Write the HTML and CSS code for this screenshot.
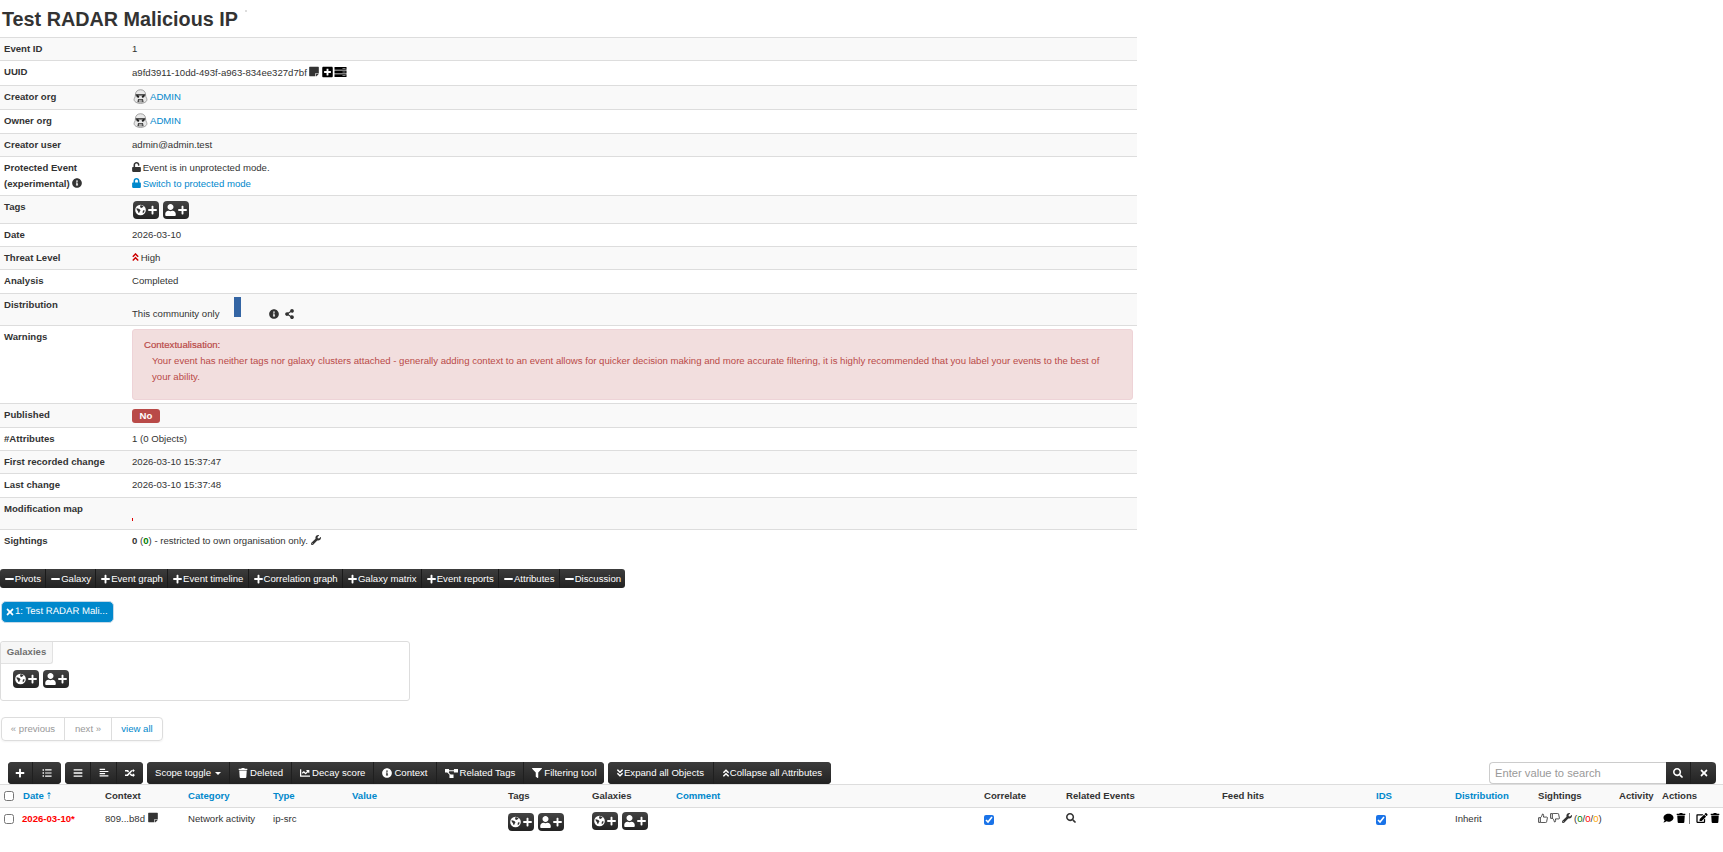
FILE: index.html
```html
<!DOCTYPE html>
<html lang="en">
<head>
<meta charset="utf-8">
<title>Test RADAR Malicious IP</title>
<link rel="stylesheet" href="styles.css">
</head>
<body>
<svg class="sprite" aria-hidden="true">
<symbol id="plus" viewBox="0 0 448 512"><path d="M416 208H272V64c0-17.67-14.33-32-32-32h-32c-17.67 0-32 14.33-32 32v144H32c-17.67 0-32 14.33-32 32v32c0 17.67 14.33 32 32 32h144v144c0 17.67 14.33 32 32 32h32c17.67 0 32-14.33 32-32V304h144c17.67 0 32-14.33 32-32v-32c0-17.67-14.33-32-32-32z"/></symbol>
<symbol id="minus" viewBox="0 0 448 512"><path d="M416 208H32c-17.67 0-32 14.33-32 32v32c0 17.67 14.33 32 32 32h384c17.67 0 32-14.33 32-32v-32c0-17.67-14.33-32-32-32z"/></symbol>
<symbol id="times" viewBox="0 0 352 512"><path d="M242.72 256l100.07-100.07c12.28-12.28 12.28-32.19 0-44.48l-22.24-22.24c-12.28-12.28-32.19-12.28-44.48 0L176 189.28 75.93 89.21c-12.28-12.28-32.19-12.28-44.48 0L9.21 111.45c-12.28 12.28-12.28 32.19 0 44.48L109.28 256 9.21 356.07c-12.28 12.28-12.28 32.19 0 44.48l22.24 22.24c12.28 12.28 32.2 12.28 44.48 0L176 322.72l100.07 100.07c12.28 12.28 32.2 12.28 44.48 0l22.24-22.24c12.28-12.28 12.28-32.19 0-44.48L242.72 256z"/></symbol>
<symbol id="info" viewBox="0 0 512 512"><path d="M256 8C119.043 8 8 119.083 8 256c0 136.997 111.043 248 248 248s248-111.003 248-248C504 119.083 392.957 8 256 8zm0 110c23.196 0 42 18.804 42 42s-18.804 42-42 42-42-18.804-42-42 18.804-42 42-42zm56 254c0 6.627-5.373 12-12 12h-88c-6.627 0-12-5.373-12-12v-24c0-6.627 5.373-12 12-12h12v-64h-12c-6.627 0-12-5.373-12-12v-24c0-6.627 5.373-12 12-12h64c6.627 0 12 5.373 12 12v100h12c6.627 0 12 5.373 12 12v24z"/></symbol>
<symbol id="search" viewBox="0 0 512 512"><path d="M505 442.7L405.3 343c-4.5-4.5-10.6-7-17-7H372c27.6-35.3 44-79.7 44-128C416 93.1 322.9 0 208 0S0 93.1 0 208s93.1 208 208 208c48.3 0 92.7-16.4 128-44v16.3c0 6.4 2.5 12.5 7 17l99.7 99.7c9.4 9.4 24.6 9.4 33.9 0l28.3-28.3c9.4-9.4 9.4-24.6.1-34zM208 336c-70.7 0-128-57.2-128-128 0-70.7 57.2-128 128-128 70.7 0 128 57.2 128 128 0 70.7-57.2 128-128 128z"/></symbol>
<symbol id="trash" viewBox="0 0 448 512"><path d="M432 32H312l-9.4-18.7A24 24 0 0 0 281.1 0H166.8a23.72 23.72 0 0 0-21.4 13.3L136 32H16A16 16 0 0 0 0 48v32a16 16 0 0 0 16 16h416a16 16 0 0 0 16-16V48a16 16 0 0 0-16-16zM53.2 467a48 48 0 0 0 47.9 45h245.8a48 48 0 0 0 47.9-45L416 128H32z"/></symbol>
<symbol id="comment" viewBox="0 0 512 512"><path d="M256 32C114.6 32 0 125.1 0 240c0 49.6 21.4 95 57 130.7C44.5 421.1 2.7 466 2.2 466.5c-2.2 2.3-2.8 5.7-1.5 8.7S4.8 480 8 480c66.3 0 116-31.8 140.6-51.4 32.7 12.3 69 19.4 107.4 19.4 141.4 0 256-93.1 256-208S397.4 32 256 32z"/></symbol>
<symbol id="bars" viewBox="0 0 448 512"><path d="M16 132h416c8.837 0 16-7.163 16-16V76c0-8.837-7.163-16-16-16H16C7.163 60 0 67.163 0 76v40c0 8.837 7.163 16 16 16zm0 160h416c8.837 0 16-7.163 16-16v-40c0-8.837-7.163-16-16-16H16c-8.837 0-16 7.163-16 16v40c0 8.837 7.163 16 16 16zm0 160h416c8.837 0 16-7.163 16-16v-40c0-8.837-7.163-16-16-16H16c-8.837 0-16 7.163-16 16v40c0 8.837 7.163 16 16 16z"/></symbol>
<symbol id="list" viewBox="0 0 512 512"><path d="M30 60h70v80H30zM30 216h70v80H30zM30 372h70v80H30zM160 70h330v60H160zM160 226h330v60H160zM160 382h330v60H160z"/></symbol>
<symbol id="align" viewBox="0 0 448 512"><path d="M0 40h280v60H0zM0 150h448v60H0zM0 260h280v60H0zM0 370h448v60H0z"/></symbol>
<symbol id="random" viewBox="0 0 512 512"><path d="M504 360l-80-80c-10-10-24-3-24 11v37h-50l-52-56-56 62 60 64c5 5 11 8 18 8h80v37c0 14 14 21 24 11l80-80c6-5 6-9 0-14zM10 176h94l52 56 56-62-60-64c-5-5-11-8-18-8H10c-6 0-10 4-10 10v58c0 6 4 10 10 10zm494-30l-80-80c-10-10-24-3-24 11v37h-80c-7 0-13 3-18 8L104 336H10c-6 0-10 4-10 10v58c0 6 4 10 10 10h122c7 0 13-3 18-8l228-248h22v37c0 14 14 21 24 11l80-80c6-5 6-5 0-10z"/></symbol>
<symbol id="filter" viewBox="0 0 512 512"><path d="M487.976 0H24.028C2.71 0-8.047 25.866 7.058 40.971L192 225.941V432c0 7.831 3.821 15.17 10.237 19.662l80 55.98C298.02 518.69 320 507.493 320 487.98V225.941l184.947-184.97C520.021 25.896 509.338 0 487.976 0z"/></symbol>
<symbol id="user" viewBox="0 0 448 512"><path d="M224 256c70.7 0 128-57.3 128-128S294.7 0 224 0 96 57.3 96 128s57.3 128 128 128zm89.6 32h-16.7c-22.2 10.2-46.9 16-72.9 16s-50.6-5.8-72.9-16h-16.7C60.2 288 0 348.2 0 422.4V464c0 26.5 21.5 48 48 48h352c26.5 0 48-21.5 48-48v-41.6c0-74.2-60.2-134.4-134.4-134.4z"/></symbol>
<symbol id="globe" viewBox="0 0 512 512"><circle cx="256" cy="256" r="248" fill="#fff"/><path fill="#333" d="M70 180c40-10 60 10 100 20 30 8 70 30 80 70 6 26-20 40-30 60-12 24-10 60-40 60-30-10-30-60-50-90-20-26-60-50-60-120zM250 40c50 0 110 20 150 60-20 30-50 10-70 40-14 20-40 30-60 10-16-16-40-30-30-60 2-20 2-40 10-50zM380 280c20-10 50-10 70 10-10 50-40 90-80 120-20-20-10-50-10-70 0-24 0-50 20-60z"/></symbol>
<symbol id="note" viewBox="0 0 448 512"><path d="M312 320h136V56c0-13.3-10.7-24-24-24H24C10.7 32 0 42.7 0 56v400c0 13.3 10.7 24 24 24h264V344c0-13.2 10.8-24 24-24zm129 55l-98 98c-4.5 4.5-10.6 7-17 7h-6V352h128v6.1c0 6.3-2.5 12.4-7 16.9z"/></symbol>
<symbol id="lock" viewBox="0 0 448 512"><path d="M400 224h-24v-72C376 68.2 307.8 0 224 0S72 68.2 72 152v72H48c-26.5 0-48 21.5-48 48v192c0 26.5 21.5 48 48 48h352c26.5 0 48-21.5 48-48V272c0-26.5-21.5-48-48-48zm-104 0H152v-72c0-39.7 32.3-72 72-72s72 32.3 72 72v72z"/></symbol>
<symbol id="unlock" viewBox="0 0 448 512"><path d="M400 256H152V152.9c0-39.6 31.7-72.5 71.3-72.9 40-.4 72.7 32.1 72.7 72v16c0 13.3 10.7 24 24 24h32c13.3 0 24-10.7 24-24v-16C376 68 307.5-.3 223.5 0 139.5.3 72 69.5 72 153.5V256H48c-26.5 0-48 21.5-48 48v160c0 26.5 21.5 48 48 48h352c26.5 0 48-21.5 48-48V304c0-26.5-21.5-48-48-48z"/></symbol>
<symbol id="plussq" viewBox="0 0 448 512"><path d="M400 32H48C21.5 32 0 53.5 0 80v352c0 26.5 21.5 48 48 48h352c26.5 0 48-21.5 48-48V80c0-26.5-21.5-48-48-48zm-32 252c0 6.6-5.4 12-12 12h-92v92c0 6.6-5.4 12-12 12h-56c-6.6 0-12-5.4-12-12v-92H92c-6.6 0-12-5.4-12-12v-56c0-6.6 5.4-12 12-12h92v-92c0-6.6 5.4-12 12-12h56c6.6 0 12 5.4 12 12v92h92c6.6 0 12 5.4 12 12v56z"/></symbol>
<symbol id="server" viewBox="0 0 512 512"><path d="M0 40h512v120H0zM0 196h512v120H0zM0 352h512v120H0z"/><path fill="#fff" d="M340 90h130v20H340zM340 246h130v20H340zM340 402h130v20H340z"/></symbol>
<symbol id="share" viewBox="0 0 448 512"><path d="M352 320c-22.608 0-43.387 7.819-59.79 20.895l-102.486-64.054a96.551 96.551 0 0 0 0-41.683l102.486-64.054C308.613 184.181 329.392 192 352 192c53.019 0 96-42.981 96-96S405.019 0 352 0s-96 42.981-96 96c0 7.158.79 14.13 2.276 20.841L155.79 180.895C139.387 167.819 118.608 160 96 160c-53.019 0-96 42.981-96 96s42.981 96 96 96c22.608 0 43.387-7.819 59.79-20.895l102.486 64.054A96.301 96.301 0 0 0 256 416c0 53.019 42.981 96 96 96s96-42.981 96-96-42.981-96-96-96z"/></symbol>
<symbol id="dblup" viewBox="0 0 320 512"><path d="M177 255.7l136 136c9.4 9.4 9.4 24.6 0 33.9l-22.6 22.6c-9.4 9.4-24.6 9.4-33.9 0L160 351.9l-96.4 96.4c-9.4 9.4-24.6 9.4-33.9 0L7 425.7c-9.4-9.4-9.4-24.6 0-33.9l136-136c9.4-9.5 24.6-9.5 34-.1zm-34-192L7 199.7c-9.4 9.4-9.4 24.6 0 33.9l22.6 22.6c9.4 9.4 24.6 9.4 33.9 0l96.4-96.4 96.4 96.4c9.4 9.4 24.6 9.4 33.9 0l22.6-22.6c9.4-9.4 9.4-24.6 0-33.9l-136-136c-9.2-9.4-24.4-9.4-33.8 0z"/></symbol>
<symbol id="dbldown" viewBox="0 0 320 512"><path transform="matrix(1 0 0 -1 0 512)" d="M177 255.7l136 136c9.4 9.4 9.4 24.6 0 33.9l-22.6 22.6c-9.4 9.4-24.6 9.4-33.9 0L160 351.9l-96.4 96.4c-9.4 9.4-24.6 9.4-33.9 0L7 425.7c-9.4-9.4-9.4-24.6 0-33.9l136-136c9.4-9.5 24.6-9.5 34-.1zm-34-192L7 199.7c-9.4 9.4-9.4 24.6 0 33.9l22.6 22.6c9.4 9.4 24.6 9.4 33.9 0l96.4-96.4 96.4 96.4c9.4 9.4 24.6 9.4 33.9 0l22.6-22.6c9.4-9.4 9.4-24.6 0-33.9l-136-136c-9.2-9.4-24.4-9.4-33.8 0z"/></symbol>
<symbol id="wrench" viewBox="0 0 512 512"><path d="M507.73 109.1c-2.24-9.03-13.54-12.09-20.12-5.51l-74.36 74.36-67.88-11.31-11.31-67.88 74.36-74.36c6.62-6.62 3.43-17.9-5.66-20.16-47.38-11.74-99.55.91-136.58 37.93-39.64 39.64-50.55 97.1-34.05 147.2L18.74 402.76c-24.99 24.99-24.99 65.51 0 90.5 24.99 24.99 65.51 24.99 90.5 0l213.21-213.21c50.12 16.71 107.47 5.68 147.37-34.22 37.07-37.07 49.7-89.32 37.91-136.73zM64 472c-13.25 0-24-10.75-24-24 0-13.26 10.75-24 24-24s24 10.74 24 24c0 13.25-10.75 24-24 24z"/></symbol>
<symbol id="edit" viewBox="0 0 576 512"><path d="M402.6 83.2l90.2 90.2c3.8 3.8 3.8 10 0 13.8L274.4 405.6l-92.8 10.3c-12.4 1.4-22.9-9.1-21.5-21.5l10.3-92.8L388.8 83.2c3.8-3.8 10-3.8 13.8 0zm162-22.9l-48.8-48.8c-15.2-15.2-39.9-15.2-55.2 0l-35.4 35.4c-3.8 3.8-3.8 10 0 13.8l90.2 90.2c3.8 3.8 10 3.8 13.8 0l35.4-35.4c15.2-15.3 15.2-40 0-55.2zM384 346.2V448H64V128h229.8c3.2 0 6.2-1.3 8.5-3.5l40-40c7.6-7.6 2.2-20.5-8.5-20.5H48C21.5 64 0 85.5 0 112v352c0 26.5 21.5 48 48 48h352c26.5 0 48-21.5 48-48V306.2c0-10.7-12.9-16-20.5-8.5l-40 40c-2.2 2.3-3.5 5.3-3.5 8.5z"/></symbol>
<symbol id="chart" viewBox="0 0 512 512"><path d="M496 384H64V80c0-8.84-7.16-16-16-16H16C7.16 64 0 71.16 0 80v336c0 17.67 14.33 32 32 32h464c8.84 0 16-7.16 16-16v-32c0-8.84-7.16-16-16-16zM464 96H345.94c-21.38 0-32.09 25.85-16.97 40.97l32.4 32.4L288 242.75l-73.37-73.37c-12.5-12.5-32.76-12.5-45.25 0l-68.69 68.69c-6.25 6.25-6.25 16.38 0 22.63l22.62 22.62c6.25 6.25 16.38 6.25 22.63 0L192 237.25l73.37 73.37c12.5 12.5 32.76 12.5 45.25 0l96-96 32.4 32.4c15.12 15.12 40.97 4.41 40.97-16.97V112c.01-8.84-7.15-16-15.99-16z"/></symbol>
<symbol id="diagram" viewBox="0 0 640 512"><path d="M0 32h200v170H0zM440 32h200v170H440zM220 310h200v170H220zM200 90h240v50H200zM110 202h60l110 108h-70z"/></symbol>
<symbol id="thumbup" viewBox="0 0 512 512"><path fill="none" stroke="currentColor" stroke-width="44" stroke-linejoin="round" d="M30 240h90v240H30zM120 250c60-50 90-110 110-200 50-10 70 40 50 160h170c30 0 40 30 30 50l-40 190c-5 30-20 40-50 40H200c-40 0-50-20-80-20"/></symbol>
<symbol id="thumbdown" viewBox="0 0 512 512"><path transform="matrix(1 0 0 -1 0 512)" fill="none" stroke="currentColor" stroke-width="44" stroke-linejoin="round" d="M30 240h90v240H30zM120 250c60-50 90-110 110-200 50-10 70 40 50 160h170c30 0 40 30 30 50l-40 190c-5 30-20 40-50 40H200c-40 0-50-20-80-20"/></symbol>
<symbol id="sort" viewBox="0 0 320 512"><path d="M40 190h240L160 60zM120 240h80v40h-80zM120 310h80v40h-80zM120 380h80v40h-80z"/></symbol>
<symbol id="trooper" viewBox="0 0 16 16"><path fill="#e8e8e8" stroke="#8a8a8a" stroke-width=".8" d="M8 .8c3.4 0 5.4 2.2 5.4 5.2 0 1.6.4 2.8 1.2 4.2.5 1 .2 2.4-.7 3.2-1.3 1.3-3.5 2-5.9 2s-4.6-.7-5.9-2c-.9-.8-1.2-2.2-.7-3.2.8-1.4 1.2-2.6 1.2-4.2C2.6 3 4.6.8 8 .8z"/><path fill="#222" d="M2.8 5.6h10.4v1.2H2.8zM3.4 7.2c1-.5 2.6-.4 3.4.5l-.6 1.5c-1.2.3-2.4-.3-2.8-2zM12.6 7.2c-1-.5-2.6-.4-3.4.5l.6 1.5c1.2.3 2.4-.3 2.8-2z"/><path fill="#444" d="M5.4 10.6h5.2l.8 3.6H4.6z"/><path fill="#ddd" d="M6.4 11.4h.7v2.4h-.7zM7.7 11.4h.7v2.4h-.7zM9 11.4h.7v2.4H9z"/></symbol>
</svg>

<h2 class="title">Test RADAR Malicious IP<span class="title-mark"></span></h2>

<table class="meta">
<tr class="r23"><th>Event ID</th><td>1</td></tr>
<tr class="r25"><th>UUID</th><td class="uuid">a9fd3911-10dd-493f-a963-834ee327d7bf <svg class="i note"><use href="#note"/></svg> <svg class="i sq"><use href="#plussq"/></svg><svg class="i srv"><use href="#server"/></svg></td></tr>
<tr class="r24"><th>Creator org</th><td><svg class="org"><use href="#trooper"/></svg><a href="#">ADMIN</a></td></tr>
<tr class="r24"><th>Owner org</th><td><svg class="org"><use href="#trooper"/></svg><a href="#">ADMIN</a></td></tr>
<tr class="r23"><th>Creator user</th><td>admin@admin.test</td></tr>
<tr class="r39"><th>Protected Event<br>(experimental) <svg class="i"><use href="#info"/></svg></th><td><svg class="i lk"><use href="#unlock"/></svg> Event is in unprotected mode.<br><a href="#"><svg class="i lk"><use href="#lock"/></svg> Switch to protected mode</a></td></tr>
<tr class="r28"><th>Tags</th><td class="tagcell"><div class="addbtns"><span class="addbtn"><svg class="i globe"><use href="#globe"/></svg><svg class="i pl"><use href="#plus"/></svg></span><span class="addbtn"><svg class="i globe"><use href="#user"/></svg><svg class="i pl"><use href="#plus"/></svg></span></div></td></tr>
<tr class="r23"><th>Date</th><td>2026-03-10</td></tr>
<tr class="r23"><th>Threat Level</th><td><svg class="i threat"><use href="#dblup"/></svg> High</td></tr>
<tr class="r24"><th>Analysis</th><td>Completed</td></tr>
<tr class="r32"><th>Distribution</th><td><div class="dist"><span>This community only</span><span class="dist-bar"></span><svg class="i dist-info"><use href="#info"/></svg><svg class="i dist-share"><use href="#share"/></svg></div></td></tr>
<tr class="r78"><th>Warnings</th><td><div class="alert"><div class="alert-title">Contextualisation:</div><div class="alert-text">Your event has neither tags nor galaxy clusters attached - generally adding context to an event allows for quicker decision making and more accurate filtering, it is highly recommended that you label your events to the best of your ability.</div></div></td></tr>
<tr class="r24"><th>Published</th><td><span class="badge">No</span></td></tr>
<tr class="r23"><th>#Attributes</th><td>1 (0 Objects)</td></tr>
<tr class="r23"><th>First recorded change</th><td>2026-03-10 15:37:47</td></tr>
<tr class="r24"><th>Last change</th><td>2026-03-10 15:37:48</td></tr>
<tr class="r32"><th>Modification map</th><td><div class="tick"></div></td></tr>
<tr class="r24"><th>Sightings</th><td><b>0</b> (<b class="green">0</b>) - restricted to own organisation only. <svg class="i"><use href="#wrench"/></svg></td></tr>
</table>

<nav class="bar bar-tabs">
<a class="item"><svg class="i"><use href="#minus"/></svg>Pivots</a>
<a class="item"><svg class="i"><use href="#minus"/></svg>Galaxy</a>
<a class="item"><svg class="i"><use href="#plus"/></svg>Event graph</a>
<a class="item"><svg class="i"><use href="#plus"/></svg>Event timeline</a>
<a class="item"><svg class="i"><use href="#plus"/></svg>Correlation graph</a>
<a class="item"><svg class="i"><use href="#plus"/></svg>Galaxy matrix</a>
<a class="item"><svg class="i"><use href="#plus"/></svg>Event reports</a>
<a class="item"><svg class="i"><use href="#minus"/></svg>Attributes</a>
<a class="item"><svg class="i"><use href="#minus"/></svg>Discussion</a>
</nav>

<a class="pivot"><svg class="i"><use href="#times"/></svg>1: Test RADAR Mali...</a>

<section class="galaxies">
<div class="galaxies-tab">Galaxies</div>
<div class="addbtns"><span class="addbtn"><svg class="i globe"><use href="#globe"/></svg><svg class="i pl"><use href="#plus"/></svg></span><span class="addbtn"><svg class="i globe"><use href="#user"/></svg><svg class="i pl"><use href="#plus"/></svg></span></div>
</section>

<ul class="pager">
<li class="off">« previous</li>
<li class="off">next »</li>
<li><a href="#">view all</a></li>
</ul>

<div class="tools">
<div class="group"><a class="tool w25"><svg class="i"><use href="#plus"/></svg></a><a class="tool w28"><svg class="i"><use href="#list"/></svg></a></div>
<div class="group"><a class="tool w26"><svg class="i"><use href="#bars"/></svg></a><a class="tool w26"><svg class="i"><use href="#align"/></svg></a><a class="tool w26"><svg class="i"><use href="#random"/></svg></a></div>
<div class="group group-scope"><a class="tool">Scope toggle<span class="caret"></span></a><a class="tool"><svg class="i"><use href="#trash"/></svg>Deleted</a><a class="tool"><svg class="i"><use href="#chart"/></svg>Decay score</a><a class="tool"><svg class="i"><use href="#info"/></svg>Context</a><a class="tool"><svg class="i wide"><use href="#diagram"/></svg>Related Tags</a><a class="tool"><svg class="i"><use href="#filter"/></svg>Filtering tool</a></div>
<div class="group group-expand"><a class="tool"><svg class="i dbl"><use href="#dbldown"/></svg>Expand all Objects</a><a class="tool"><svg class="i dbl"><use href="#dblup"/></svg>Collapse all Attributes</a></div>
<div class="search"><input class="search-input" type="text" placeholder="Enter value to search"><a class="tool w25 first"><svg class="i"><use href="#search"/></svg></a><a class="tool w25"><svg class="i"><use href="#times"/></svg></a></div>
</div>

<table class="attrs">
<colgroup><col class="c19"><col class="c82"><col class="c83"><col class="c85"><col class="c79"><col class="c156"><col class="c84"><col class="c84"><col class="c308"><col class="c82"><col class="c156"><col class="c154"><col class="c79"><col class="c83"><col class="c81"><col class="c43"><col class="c65"></colgroup>
<thead><tr>
<th><input type="checkbox" class="cb"></th><th><a href="#">Date <svg class="i sort"><use href="#sort"/></svg></a></th><th>Context</th><th><a href="#">Category</a></th><th><a href="#">Type</a></th><th><a href="#">Value</a></th><th>Tags</th><th>Galaxies</th><th><a href="#">Comment</a></th><th>Correlate</th><th>Related Events</th><th>Feed hits</th><th><a href="#">IDS</a></th><th><a href="#">Distribution</a></th><th>Sightings</th><th>Activity</th><th>Actions</th>
</tr></thead>
<tbody><tr>
<td><input type="checkbox" class="cb"></td>
<td class="date">2026-03-10*</td>
<td>809...b8d <svg class="i note"><use href="#note"/></svg></td>
<td>Network activity</td>
<td>ip-src</td>
<td></td>
<td class="tagcol"><div class="addbtns"><span class="addbtn"><svg class="i globe"><use href="#globe"/></svg><svg class="i pl"><use href="#plus"/></svg></span><span class="addbtn"><svg class="i globe"><use href="#user"/></svg><svg class="i pl"><use href="#plus"/></svg></span></div></td>
<td class="galcol"><div class="addbtns"><span class="addbtn"><svg class="i globe"><use href="#globe"/></svg><svg class="i pl"><use href="#plus"/></svg></span><span class="addbtn"><svg class="i globe"><use href="#user"/></svg><svg class="i pl"><use href="#plus"/></svg></span></div></td>
<td></td>
<td><input type="checkbox" class="cb cb-on" checked></td>
<td><svg class="i"><use href="#search"/></svg></td>
<td></td>
<td><input type="checkbox" class="cb cb-on" checked></td>
<td>Inherit</td>
<td class="sight"><svg class="i"><use href="#thumbup"/></svg><svg class="i"><use href="#thumbdown"/></svg><svg class="i"><use href="#wrench"/></svg><span>(<b class="plain green">0</b>/<b class="plain red">0</b>/<b class="plain orange">0</b>)</span></td>
<td></td>
<td class="acts"><svg class="i cmt"><use href="#comment"/></svg><svg class="i"><use href="#trash"/></svg><span class="sep"></span><svg class="i edit"><use href="#edit"/></svg><svg class="i"><use href="#trash"/></svg></td>
</tr></tbody>
</table>
</body>
</html>
```

FILE: styles.css
```css
* { box-sizing: border-box; }
html, body { margin: 0; padding: 0; background: #fff; }
body { font: 9.6px/16px "Liberation Sans", Arial, sans-serif; color: #333; overflow: hidden; }
a { color: #0088cc; text-decoration: none; }
.sprite { display: none; }
.i { width: 10px; height: 10px; fill: currentColor; vertical-align: -1px; }

.title { margin: 0; height: 37px; font-size: 19.8px; line-height: 38px; font-weight: 700; color: #333; padding-left: 2px; }
.title-mark { display: inline-block; width: 2px; height: 2px; background: #ddd; vertical-align: 14px; margin-left: 7px; }

.meta { width: 1137px; border-collapse: separate; border-spacing: 0; }
.meta th, .meta td { border-top: 1px solid #ddd; padding: 3px 4px 0; text-align: left; vertical-align: top; }
.meta th { width: 128px; font-weight: 700; }
.meta tr:nth-child(odd) th, .meta tr:nth-child(odd) td { background: #f9f9f9; }
.r23 { height: 23px; } .r24 { height: 24px; } .r25 { height: 25px; } .r28 { height: 28px; }
.r32 { height: 32px; } .r39 { height: 39px; } .r78 { height: 78px; }

.meta .uuid { padding-top: 4px; }
.note { color: #333; height: 11px; }
.sq { color: #000; width: 11px; height: 12px; vertical-align: -2px; }
.srv { color: #000; width: 13px; height: 12px; vertical-align: -2px; margin-left: 1px; }
.org { width: 15px; height: 15px; margin: 0 2px 0 1px; vertical-align: -4px; }
.lk { width: 9px; margin-right: -1px; }
.threat { color: #cc0000; width: 7px; margin-right: -1px; }
.green { color: #008000; }
.red { color: #ff0000; }
.orange { color: #ffa500; }
.plain { font-weight: 400; }

.addbtns { display: flex; gap: 4px; }
.addbtn { display: inline-flex; align-items: center; justify-content: center; gap: 2px; width: 26px; height: 18px; border-radius: 4px; color: #fff; background: linear-gradient(#444, #222); }
.globe { width: 11px; height: 12px; }
.pl { width: 9px; height: 10px; }
.meta .tagcell { padding: 5px 4px 0 5px; }

.dist { display: flex; align-items: flex-end; height: 25px; }
.dist-bar { align-self: flex-start; width: 7px; height: 20px; margin-left: 15px; background: #3465a4; }
.dist-info { margin: 0 0 3px 28px; width: 10px; height: 10px; }
.dist-share { margin: 0 0 3px 6px; width: 9px; height: 10px; }

.alert { height: 71px; padding: 7px 23px 0 11px; border: 1px solid #eed3d7; border-radius: 3px; background: #f2dede; color: #b94a48; }
.alert-title { -webkit-text-stroke: .2px #b94a48; }
.alert-text { padding-left: 8px; }

.badge { display: inline-block; width: 28px; height: 14px; margin-top: 2px; line-height: 14px; text-align: center; color: #fff; font-weight: 700; border-radius: 3px; background: #b94a48; }
.tick { width: 1px; height: 3px; margin-top: 17px; background: #e00000; }

.bar { display: flex; width: 625px; height: 19px; margin-top: 16px; border-radius: 3px; background: linear-gradient(#3c3c3c, #222); color: #fff; }
.item { display: inline-flex; align-items: center; gap: 1px; padding: 0 4.4px 0 4.8px; color: #fff; border-right: 1px solid #1a1a1a; white-space: nowrap; }
.item:last-child { border-right: 0; flex: auto; }
.item .i { width: 9px; height: 10px; }

.pivot { display: flex; align-items: center; gap: 1px; width: 113px; height: 22px; margin: 13px 0 0 1px; padding-left: 4px; font-size: 9.6px; text-rendering: geometricPrecision; border-radius: 5px; border: 1px solid #c5d9e8; background: #0088cc; color: #fff; white-space: nowrap; }
.pivot .i { flex: none; width: 8px; height: 10px; }

.galaxies { width: 410px; height: 60px; margin-top: 18px; border: 1px solid #ddd; border-radius: 3px; }
.galaxies-tab { width: 52px; height: 22px; line-height: 20px; text-align: center; color: #555; font-weight: 700; opacity: .85; background: #f5f5f5; border-right: 1px solid #ddd; border-bottom: 1px solid #ddd; border-radius: 3px 0 3px 0; }
.galaxies .addbtns { margin: 6px 0 0 12px; }

.pager { display: flex; width: 162px; height: 24px; margin: 16px 0 0 1px; padding: 0; list-style: none; border: 1px solid #ddd; border-radius: 4px; box-shadow: 0 1px 2px rgba(0,0,0,.05); }
.pager li { line-height: 22px; text-align: center; border-right: 1px solid #ddd; flex: 0 0 51px; }
.pager li:first-child { flex-basis: 63px; }
.pager li:nth-child(2) { flex-basis: 47px; }
.pager li:last-child { border-right: 0; flex: 1; }
.off { color: #999; }

.tools { display: flex; height: 22px; margin: 21px 0 0 8px; gap: 4px; }
.group { display: flex; border-radius: 4px; overflow: hidden; background: linear-gradient(#3c3c3c, #222); }
.group-scope { width: 457px; }
.group-expand { width: 223px; }
.tool { display: inline-flex; align-items: center; justify-content: center; gap: 2px; height: 22px; padding: 0 8px; color: #fff; border-right: 1px solid #1f1f1f; white-space: nowrap; background: linear-gradient(#3c3c3c, #222); flex: auto; }
.tool:last-child { border-right: 0; }
.w25 { width: 25px; padding: 0; flex: none; } .w26 { width: 26px; padding: 0; flex: none; } .w28 { width: 28px; padding: 0; flex: none; }
.wide { width: 13px; height: 11px; }
.dbl { width: 6px; height: 10px; margin-right: -1px; }
.caret { width: 0; height: 0; margin-left: 2px; border: 3px solid transparent; border-top-color: #fff; border-bottom: 0; }
.search { display: flex; margin-left: auto; margin-right: 7px; width: 227px; }
.search-input { width: 177px; height: 22px; padding: 0 5px; font: 11.2px "Liberation Sans", Arial, sans-serif; border: 1px solid #ccc; border-right: 0; border-radius: 4px 0 0 4px; outline: 0; }
.search-input::placeholder { color: #999; opacity: 1; }
.search .tool:last-child { border-radius: 0 4px 4px 0; }

.attrs { width: 1723px; table-layout: fixed; border-collapse: separate; border-spacing: 0; }
.attrs th, .attrs td { padding: 3px 4px 0; text-align: left; vertical-align: top; }
.attrs thead tr { height: 24px; background: #f9f9f9; }
.attrs th { border-top: 1px solid #ddd; border-bottom: 1px solid #ddd; font-weight: 700; }
.attrs tbody tr { height: 25px; }
.cb { width: 10px; height: 10px; margin: 3px 0 0; vertical-align: top; accent-color: #1a73e8; }
.cb-on { margin-top: 4px; }
.sort { width: 6px; height: 9px; }
.attrs .date { color: #ff0000; font-weight: 700; padding-left: 3px; }
.attrs .tagcol { padding-top: 5px; }
.attrs .galcol { padding-top: 4px; }
.sight { white-space: nowrap; }
.sight .i { margin-right: 2px; }
.attrs .acts { white-space: nowrap; color: #000; padding: 3px 0 0 5px; }
.acts .i { margin-right: 2px; }
.acts .cmt { width: 11px; }
.sep { display: inline-block; width: 1px; height: 11px; margin: 0 6px 0 1px; background: #777; vertical-align: -2px; }
.edit { width: 12px; }
.c19{width:19px}.c82{width:82px}.c83{width:83px}.c85{width:85px}.c79{width:79px}.c156{width:156px}.c84{width:84px}.c308{width:308px}.c154{width:154px}.c81{width:81px}.c43{width:43px}.c65{width:65px}
```
